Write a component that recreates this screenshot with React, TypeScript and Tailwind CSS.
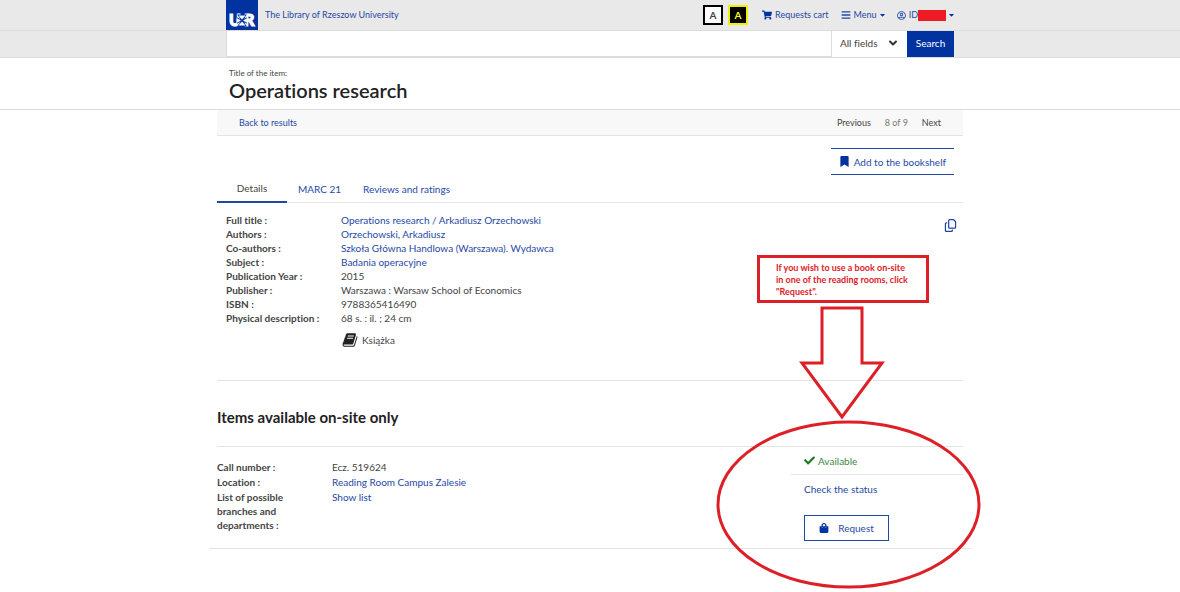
import type { ReactNode } from "react";
import {
  FaBars,
  FaBookmark,
  FaCaretDown,
  FaCheck,
  FaRegUserCircle,
  FaShoppingBag,
  FaShoppingCart
} from "react-icons/fa";
import { FaRegCopy } from "react-icons/fa6";
import { LuChevronDown } from "react-icons/lu";

const TABS = ["Details", "MARC 21", "Reviews and ratings"];

const DETAILS = [
  {
    label: "Full title :",
    value: "Operations research / Arkadiusz Orzechowski",
    link: true
  },
  { label: "Authors :", value: "Orzechowski, Arkadiusz", link: true },
  {
    label: "Co-authors :",
    value: "Szkoła Główna Handlowa (Warszawa). Wydawca",
    link: true
  },
  { label: "Subject :", value: "Badania operacyjne", link: true },
  { label: "Publication Year :", value: "2015", link: false },
  {
    label: "Publisher :",
    value: "Warszawa : Warsaw School of Economics",
    link: false
  },
  { label: "ISBN :", value: "9788365416490", link: false },
  { label: "Physical description :", value: "68 s. : il. ; 24 cm", link: false }
];

const HOLDING = [
  { label: "Call number :", value: "Ecz. 519624", link: false },
  { label: "Location :", value: "Reading Room Campus Zalesie", link: true },
  {
    label: "List of possible branches and departments :",
    value: "Show list",
    link: true
  }
];

function Container({
  children,
  className = ""
}: {
  children: ReactNode;
  className?: string;
}) {
  return (
    <div className={`mx-auto w-full max-w-[746px] ${className}`}>{children}</div>
  );
}

function Value({ value, link }: { value: string; link: boolean }) {
  return link ? (
    <a href="#" className="text-[#1f48a5]">
      {value}
    </a>
  ) : (
    <>{value}</>
  );
}

function Logo() {
  return (
    <a href="#" aria-label="University of Rzeszow" className="block h-[30px] w-8">
      <svg viewBox="0 0 32 30" className="h-full w-full">
        <rect width="32" height="30" fill="#0032a0" />
        <g
          fill="#fff"
          stroke="#fff"
          strokeWidth="1.2"
          fontFamily="Lato, sans-serif"
          fontWeight="900"
          fontSize="16"
        >
          <text x="3" y="26">
            U
          </text>
          <text x="18" y="26">
            R
          </text>
        </g>
        <path
          d="M11 14.500h10l-3.600 4.700 3.600-2v6.600l-3.600-2 3.600 4.700h-10l3.600-4.700-3.600 2v-6.600l3.600 2z"
          fill="#0032a0"
        />
        <path
          d="M12.500 15.500l3.500 4 3.500-4M12.500 25.500l3.500-4 3.500 4M10.500 18l4.500 2.500-4.500 2.500M21.500 18l-4.500 2.500 4.500 2.500"
          fill="#fff"
        />
      </svg>
    </a>
  );
}

function BookIcon() {
  return (
    <svg viewBox="0 0 1792 1792" className="size-4" fill="#222" aria-hidden>
      <path d="M1703 478q40 57 18 129l-275 906q-19 64-76.500 107.500t-122.500 43.500h-923q-77 0-148.500-53.500t-99.500-131.500q-24-67-2-127 0-4 3-27t4-37q1-8-3-21.500t-3-19.500q2-11 8-21t16.500-23.500 16.500-23.500q23-38 45-91.500t30-91.500q3-10 .5-30t-.5-28q3-11 17-28t17-23q21-36 42-92t25-90q1-9-2.500-32t.5-28q4-13 22-30.500t22-22.500q19-26 42.500-84.500t27.500-96.500q1-8-3-25.500t-2-26.500q2-8 9-18t18-23 17-21q8-12 16.500-30.500t15-35 16-36 19.500-32 26.500-23.500 36-11.500 47.500 5.500l-1 3q38-9 51-9h761q74 0 114 56t18 130l-274 906q-36 119-71.500 153.500t-128.500 34.500h-869q-27 0-38 15-11 16-1 43 24 70 144 70h923q29 0 56-15.500t35-41.500l300-987q7-22 5-57 38 15 59 43zm-1064 2q-4 13 2 22.500t20 9.500h608q13 0 25.500-9.500t16.500-22.500l21-64q4-13-2-22.500t-20-9.500h-608q-13 0-25.500 9.500t-16.500 22.500zm-83 256q-4 13 2 22.500t20 9.500h608q13 0 25.500-9.500t16.500-22.500l21-64q4-13-2-22.500t-20-9.500h-608q-13 0-25.500 9.500t-16.500 22.500z" />
    </svg>
  );
}

function TopBar() {
  return (
    <div className="border-b border-[#dcdcdc] bg-[#e9e9e9]">
      <Container className="flex h-[30px] items-center px-[9px] text-[9px] text-[#1f48a5]">
        <Logo />
        <a href="#" className="ml-[7px]">
          The Library of Rzeszow University
        </a>
        <div className="ml-auto flex items-center">
          <button
            aria-label="Default contrast"
            className="size-5 border-2 border-black bg-white text-[10px] leading-none font-bold text-[#444]"
          >
            A
          </button>
          <button
            aria-label="High contrast"
            className="ml-[5px] size-5 border-2 border-[#f0f000] bg-black text-[10px] leading-none font-bold text-[#ffff00]"
          >
            A
          </button>
          <a href="#" className="ml-[14px] flex items-center gap-[3px]">
            <FaShoppingCart className="size-[10px] text-[#0032a0]" />
            Requests cart
          </a>
          <button className="ml-3 flex items-center gap-[3px]">
            <FaBars className="size-[10px]" />
            Menu
            <FaCaretDown className="h-2 w-[5px] text-[#0032a0]" />
          </button>
          <button className="ml-3 flex items-center gap-[3px]">
            <FaRegUserCircle className="size-[9px]" />
            <span className="flex items-center">
              ID
              <span className="h-[11px] w-7 bg-[#ed1c24]" />
            </span>
            <FaCaretDown className="h-2 w-[5px] text-[#0032a0]" />
          </button>
        </div>
      </Container>
    </div>
  );
}

function SearchBar() {
  return (
    <div className="border-b border-[#dcdcdc] bg-[#e9e9e9]">
      <Container className="px-[9px]">
        <form className="flex h-[26px] text-[10px]">
          <input
            type="text"
            aria-label="Search the catalogue"
            className="min-w-0 flex-1 border border-t-0 border-[#dcdcdc] bg-white px-2 outline-none"
          />
          <div className="relative w-[75px]">
            <select
              aria-label="Search field"
              className="h-full w-full appearance-none bg-white px-2 pb-[2px] text-[#444] outline-none"
            >
              <option>All fields</option>
            </select>
            <LuChevronDown
              strokeWidth={4}
              className="pointer-events-none absolute top-[6px] right-2 size-3 text-[#333]"
            />
          </div>
          <button type="button" className="w-[47px] bg-[#0032a0] pb-[2px] text-white">
            Search
          </button>
        </form>
      </Container>
    </div>
  );
}

/* Hand-drawn style callout pointing at the request button */
function Callout() {
  return (
    <div className="pointer-events-none absolute top-[145px] left-[499px] h-[334px] w-[265px]">
      <p className="ml-[41px] h-12 w-[172px] border-[3px] border-[#dd2027] px-4 pt-1 text-[9px] leading-3 font-bold whitespace-pre text-[#dd2027]">
        {'If you wish to use a book on-site\nin one of the reading rooms, click\n"Request".'}
      </p>
      <svg
        viewBox="0 0 265 334"
        className="absolute inset-0 h-full w-full"
        fill="none"
        stroke="#dd2027"
        strokeWidth="3"
        aria-hidden
      >
        <path d="M106 53h40v55h20l-40 54-40-54h20z" />
        <ellipse cx="132.500" cy="249.500" rx="130.500" ry="82.500" />
      </svg>
    </div>
  );
}

export default function App() {
  return (
    <div className="min-h-screen bg-white font-['Lato',sans-serif] text-[10px] leading-[14px] text-[#444] [font-variant-ligatures:none]">
      <header>
        <TopBar />
        <SearchBar />
        <div className="border-b border-[#dcdcdc]">
          <Container className="px-3 pt-2 pb-[9px]">
            <p className="text-[8px] leading-[14px]">Title of the item:</p>
            <h1 className="text-[20px] leading-5 font-semibold text-[#222]">
              Operations research
            </h1>
          </Container>
        </div>
      </header>

      <Container className="relative">
        <nav className="flex h-[26px] items-center border-b border-[#e4e4e4] bg-[#f8f8f8] px-[22px] text-[9px]">
          <a href="#" className="text-[#1f48a5]">
            Back to results
          </a>
          <div className="ml-auto flex gap-[14px]">
            <a href="#">Previous</a>
            <span className="text-[#777]">8 of 9</span>
            <a href="#">Next</a>
          </div>
        </nav>

        <div className="flex justify-end px-[9px] pt-3">
          <button className="flex h-[27px] items-center gap-[4px] border-y border-[#1f48a5] px-2 text-[#1f48a5]">
            <FaBookmark className="size-[11px] text-[#0032a0]" />
            Add to the bookshelf
          </button>
        </div>

        <div role="tablist" className="flex h-7 border-b border-[#e4e4e4]">
          {TABS.map((tab, i) => (
            <button
              key={tab}
              role="tab"
              aria-selected={i === 0}
              className={
                i === 0
                  ? "-mb-px w-[70px] border-b-2 border-[#1f48a5]"
                  : "px-[11px] text-[#1f48a5]"
              }
            >
              {tab}
            </button>
          ))}
        </div>

        <section className="flex justify-between border-b border-[#e4e4e4] px-[9px] pt-[10px] pb-8">
          <div>
            <dl>
              {DETAILS.map((d) => (
                <div key={d.label} className="flex">
                  <dt className="w-[115px] font-bold">{d.label}</dt>
                  <dd>
                    <Value value={d.value} link={d.link} />
                  </dd>
                </div>
              ))}
            </dl>
            <p className="mt-[7px] ml-[116px] flex items-center gap-1">
              <BookIcon />
              Książka
            </p>
          </div>
          <button
            aria-label="Copy"
            className="mt-[5px] mr-[-3px] h-[14px] text-[#1f48a5]"
          >
            <FaRegCopy className="size-[13px]" />
          </button>
        </section>

        <h2 className="pt-[26px] pb-[19px] text-[15px] leading-5 font-bold text-[#222]">
          Items available on-site only
        </h2>

        <section className="-mx-2 border-b border-[#e4e4e4] px-2">
          <div className="flex justify-between border-t border-[#e4e4e4] pb-[7px]">
            <dl className="flex flex-col gap-px pt-[13px]">
              {HOLDING.map((h) => (
                <div key={h.label} className="flex gap-[30px]">
                  <dt className="w-[85px] font-bold">{h.label}</dt>
                  <dd>
                    <Value value={h.value} link={h.link} />
                  </dd>
                </div>
              ))}
            </dl>
            <div className="w-[172px]">
              <p className="flex h-7 items-center gap-[3px] border-b border-[#e4e4e4] px-[13px] text-[#3d8540]">
                <FaCheck className="size-[11px] text-[#1f7a28]" />
                Available
              </p>
              <div className="flex flex-col items-start gap-[19px] px-[13px] pt-[7px]">
                <a href="#" className="text-[#1f48a5]">
                  Check the status
                </a>
                <button className="flex h-[26px] w-[85px] items-center justify-center gap-[9px] border border-[#1f48a5] text-[#1f48a5]">
                  <FaShoppingBag className="size-[10px] text-[#0032a0]" />
                  Request
                </button>
              </div>
            </div>
          </div>
        </section>

        <Callout />
      </Container>
    </div>
  );
}
